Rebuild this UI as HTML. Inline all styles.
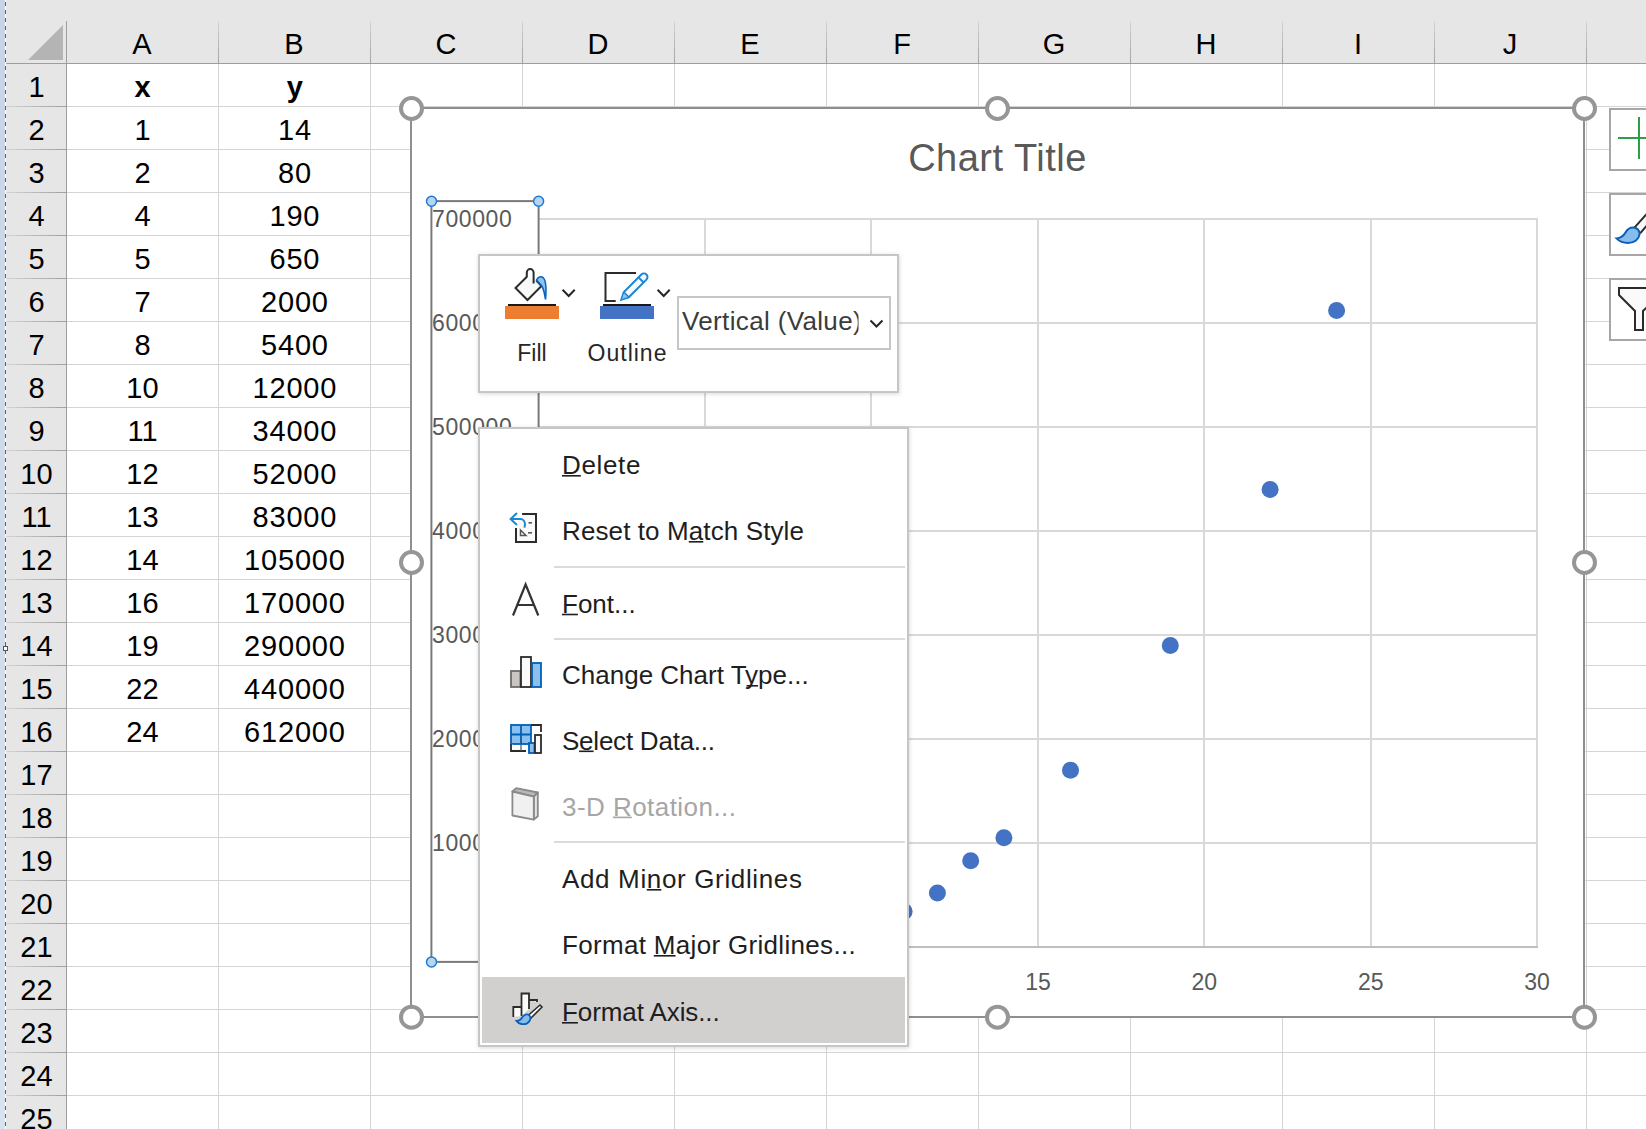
<!DOCTYPE html>
<html><head><meta charset="utf-8"><title>Excel chart</title><style>
html,body{margin:0;padding:0;width:1646px;height:1129px;overflow:hidden;background:#fff;}
svg{position:absolute;left:0;top:0;display:block;}
text{font-family:"Liberation Sans", sans-serif;}
</style></head><body>
<svg width="1646" height="1129" viewBox="0 0 1646 1129">
<defs>
<linearGradient id="hsep" x1="0" y1="0" x2="0" y2="1"><stop offset="0" stop-color="#d4d4d4"/><stop offset="1" stop-color="#a0a0a0"/></linearGradient>
<linearGradient id="vsep" x1="0" y1="0" x2="1" y2="0"><stop offset="0" stop-color="#d4d4d4"/><stop offset="1" stop-color="#a0a0a0"/></linearGradient>
<linearGradient id="strip" x1="0" y1="0" x2="0" y2="1"><stop offset="0" stop-color="#c8d4e6"/><stop offset="1" stop-color="#d9e2ef"/></linearGradient>
<filter id="sh" x="-5%" y="-5%" width="115%" height="115%"><feDropShadow dx="0.5" dy="1" stdDeviation="2" flood-color="#000" flood-opacity="0.15"/></filter>
</defs>
<rect x="0" y="0" width="5" height="1129" fill="url(#strip)"/>
<rect x="5" y="0" width="1" height="1129" fill="#fff"/>
<line x1="5.5" y1="2" x2="5.5" y2="1129" stroke="#0877d9" stroke-width="1" stroke-dasharray="4 4"/>
<rect x="6" y="0" width="1640" height="63" fill="#e6e6e6"/>
<rect x="6" y="63" width="60" height="1066" fill="#e6e6e6"/>
<rect x="218" y="64" width="1" height="1065" fill="#d4d4d4"/>
<rect x="370" y="64" width="1" height="1065" fill="#d4d4d4"/>
<rect x="522" y="64" width="1" height="1065" fill="#d4d4d4"/>
<rect x="674" y="64" width="1" height="1065" fill="#d4d4d4"/>
<rect x="826" y="64" width="1" height="1065" fill="#d4d4d4"/>
<rect x="978" y="64" width="1" height="1065" fill="#d4d4d4"/>
<rect x="1130" y="64" width="1" height="1065" fill="#d4d4d4"/>
<rect x="1282" y="64" width="1" height="1065" fill="#d4d4d4"/>
<rect x="1434" y="64" width="1" height="1065" fill="#d4d4d4"/>
<rect x="1586" y="64" width="1" height="1065" fill="#d4d4d4"/>
<rect x="67" y="106" width="1579" height="1" fill="#d4d4d4"/>
<rect x="67" y="149" width="1579" height="1" fill="#d4d4d4"/>
<rect x="67" y="192" width="1579" height="1" fill="#d4d4d4"/>
<rect x="67" y="235" width="1579" height="1" fill="#d4d4d4"/>
<rect x="67" y="278" width="1579" height="1" fill="#d4d4d4"/>
<rect x="67" y="321" width="1579" height="1" fill="#d4d4d4"/>
<rect x="67" y="364" width="1579" height="1" fill="#d4d4d4"/>
<rect x="67" y="407" width="1579" height="1" fill="#d4d4d4"/>
<rect x="67" y="450" width="1579" height="1" fill="#d4d4d4"/>
<rect x="67" y="493" width="1579" height="1" fill="#d4d4d4"/>
<rect x="67" y="536" width="1579" height="1" fill="#d4d4d4"/>
<rect x="67" y="579" width="1579" height="1" fill="#d4d4d4"/>
<rect x="67" y="622" width="1579" height="1" fill="#d4d4d4"/>
<rect x="67" y="665" width="1579" height="1" fill="#d4d4d4"/>
<rect x="67" y="708" width="1579" height="1" fill="#d4d4d4"/>
<rect x="67" y="751" width="1579" height="1" fill="#d4d4d4"/>
<rect x="67" y="794" width="1579" height="1" fill="#d4d4d4"/>
<rect x="67" y="837" width="1579" height="1" fill="#d4d4d4"/>
<rect x="67" y="880" width="1579" height="1" fill="#d4d4d4"/>
<rect x="67" y="923" width="1579" height="1" fill="#d4d4d4"/>
<rect x="67" y="966" width="1579" height="1" fill="#d4d4d4"/>
<rect x="67" y="1009" width="1579" height="1" fill="#d4d4d4"/>
<rect x="67" y="1052" width="1579" height="1" fill="#d4d4d4"/>
<rect x="67" y="1095" width="1579" height="1" fill="#d4d4d4"/>
<rect x="6" y="63" width="1640" height="1" fill="#9e9e9e"/>
<rect x="66" y="21" width="1" height="1108" fill="#9e9e9e"/>
<rect x="218" y="21" width="1" height="42" fill="url(#hsep)"/>
<rect x="370" y="21" width="1" height="42" fill="url(#hsep)"/>
<rect x="522" y="21" width="1" height="42" fill="url(#hsep)"/>
<rect x="674" y="21" width="1" height="42" fill="url(#hsep)"/>
<rect x="826" y="21" width="1" height="42" fill="url(#hsep)"/>
<rect x="978" y="21" width="1" height="42" fill="url(#hsep)"/>
<rect x="1130" y="21" width="1" height="42" fill="url(#hsep)"/>
<rect x="1282" y="21" width="1" height="42" fill="url(#hsep)"/>
<rect x="1434" y="21" width="1" height="42" fill="url(#hsep)"/>
<rect x="1586" y="21" width="1" height="42" fill="url(#hsep)"/>
<rect x="6" y="106" width="60" height="1" fill="url(#vsep)"/>
<rect x="6" y="149" width="60" height="1" fill="url(#vsep)"/>
<rect x="6" y="192" width="60" height="1" fill="url(#vsep)"/>
<rect x="6" y="235" width="60" height="1" fill="url(#vsep)"/>
<rect x="6" y="278" width="60" height="1" fill="url(#vsep)"/>
<rect x="6" y="321" width="60" height="1" fill="url(#vsep)"/>
<rect x="6" y="364" width="60" height="1" fill="url(#vsep)"/>
<rect x="6" y="407" width="60" height="1" fill="url(#vsep)"/>
<rect x="6" y="450" width="60" height="1" fill="url(#vsep)"/>
<rect x="6" y="493" width="60" height="1" fill="url(#vsep)"/>
<rect x="6" y="536" width="60" height="1" fill="url(#vsep)"/>
<rect x="6" y="579" width="60" height="1" fill="url(#vsep)"/>
<rect x="6" y="622" width="60" height="1" fill="url(#vsep)"/>
<rect x="6" y="665" width="60" height="1" fill="url(#vsep)"/>
<rect x="6" y="708" width="60" height="1" fill="url(#vsep)"/>
<rect x="6" y="751" width="60" height="1" fill="url(#vsep)"/>
<rect x="6" y="794" width="60" height="1" fill="url(#vsep)"/>
<rect x="6" y="837" width="60" height="1" fill="url(#vsep)"/>
<rect x="6" y="880" width="60" height="1" fill="url(#vsep)"/>
<rect x="6" y="923" width="60" height="1" fill="url(#vsep)"/>
<rect x="6" y="966" width="60" height="1" fill="url(#vsep)"/>
<rect x="6" y="1009" width="60" height="1" fill="url(#vsep)"/>
<rect x="6" y="1052" width="60" height="1" fill="url(#vsep)"/>
<rect x="6" y="1095" width="60" height="1" fill="url(#vsep)"/>
<polygon points="28,60 63,60 63,25" fill="#b4b4b4"/>
<text x="142" y="54" font-size="29" text-anchor="middle">A</text>
<text x="294" y="54" font-size="29" text-anchor="middle">B</text>
<text x="446" y="54" font-size="29" text-anchor="middle">C</text>
<text x="598" y="54" font-size="29" text-anchor="middle">D</text>
<text x="750" y="54" font-size="29" text-anchor="middle">E</text>
<text x="902" y="54" font-size="29" text-anchor="middle">F</text>
<text x="1054" y="54" font-size="29" text-anchor="middle">G</text>
<text x="1206" y="54" font-size="29" text-anchor="middle">H</text>
<text x="1358" y="54" font-size="29" text-anchor="middle">I</text>
<text x="1510" y="54" font-size="29" text-anchor="middle">J</text>
<text x="36.5" y="97" font-size="29" text-anchor="middle">1</text>
<text x="36.5" y="140" font-size="29" text-anchor="middle">2</text>
<text x="36.5" y="183" font-size="29" text-anchor="middle">3</text>
<text x="36.5" y="226" font-size="29" text-anchor="middle">4</text>
<text x="36.5" y="269" font-size="29" text-anchor="middle">5</text>
<text x="36.5" y="312" font-size="29" text-anchor="middle">6</text>
<text x="36.5" y="355" font-size="29" text-anchor="middle">7</text>
<text x="36.5" y="398" font-size="29" text-anchor="middle">8</text>
<text x="36.5" y="441" font-size="29" text-anchor="middle">9</text>
<text x="36.5" y="484" font-size="29" text-anchor="middle">10</text>
<text x="36.5" y="527" font-size="29" text-anchor="middle">11</text>
<text x="36.5" y="570" font-size="29" text-anchor="middle">12</text>
<text x="36.5" y="613" font-size="29" text-anchor="middle">13</text>
<text x="36.5" y="656" font-size="29" text-anchor="middle">14</text>
<text x="36.5" y="699" font-size="29" text-anchor="middle">15</text>
<text x="36.5" y="742" font-size="29" text-anchor="middle">16</text>
<text x="36.5" y="785" font-size="29" text-anchor="middle">17</text>
<text x="36.5" y="828" font-size="29" text-anchor="middle">18</text>
<text x="36.5" y="871" font-size="29" text-anchor="middle">19</text>
<text x="36.5" y="914" font-size="29" text-anchor="middle">20</text>
<text x="36.5" y="957" font-size="29" text-anchor="middle">21</text>
<text x="36.5" y="1000" font-size="29" text-anchor="middle">22</text>
<text x="36.5" y="1043" font-size="29" text-anchor="middle">23</text>
<text x="36.5" y="1086" font-size="29" text-anchor="middle">24</text>
<text x="36.5" y="1129" font-size="29" text-anchor="middle">25</text>
<text x="142.5" y="97" font-size="29" font-weight="bold" text-anchor="middle">x</text>
<text x="294.9" y="97" font-size="29" font-weight="bold" text-anchor="middle">y</text>
<text x="142.5" y="140" font-size="29" text-anchor="middle">1</text>
<text x="294.9" y="140" font-size="29" letter-spacing="0.8" text-anchor="middle">14</text>
<text x="142.5" y="183" font-size="29" text-anchor="middle">2</text>
<text x="294.9" y="183" font-size="29" letter-spacing="0.8" text-anchor="middle">80</text>
<text x="142.5" y="226" font-size="29" text-anchor="middle">4</text>
<text x="294.9" y="226" font-size="29" letter-spacing="0.8" text-anchor="middle">190</text>
<text x="142.5" y="269" font-size="29" text-anchor="middle">5</text>
<text x="294.9" y="269" font-size="29" letter-spacing="0.8" text-anchor="middle">650</text>
<text x="142.5" y="312" font-size="29" text-anchor="middle">7</text>
<text x="294.9" y="312" font-size="29" letter-spacing="0.8" text-anchor="middle">2000</text>
<text x="142.5" y="355" font-size="29" text-anchor="middle">8</text>
<text x="294.9" y="355" font-size="29" letter-spacing="0.8" text-anchor="middle">5400</text>
<text x="142.5" y="398" font-size="29" text-anchor="middle">10</text>
<text x="294.9" y="398" font-size="29" letter-spacing="0.8" text-anchor="middle">12000</text>
<text x="142.5" y="441" font-size="29" text-anchor="middle">11</text>
<text x="294.9" y="441" font-size="29" letter-spacing="0.8" text-anchor="middle">34000</text>
<text x="142.5" y="484" font-size="29" text-anchor="middle">12</text>
<text x="294.9" y="484" font-size="29" letter-spacing="0.8" text-anchor="middle">52000</text>
<text x="142.5" y="527" font-size="29" text-anchor="middle">13</text>
<text x="294.9" y="527" font-size="29" letter-spacing="0.8" text-anchor="middle">83000</text>
<text x="142.5" y="570" font-size="29" text-anchor="middle">14</text>
<text x="294.9" y="570" font-size="29" letter-spacing="0.8" text-anchor="middle">105000</text>
<text x="142.5" y="613" font-size="29" text-anchor="middle">16</text>
<text x="294.9" y="613" font-size="29" letter-spacing="0.8" text-anchor="middle">170000</text>
<text x="142.5" y="656" font-size="29" text-anchor="middle">19</text>
<text x="294.9" y="656" font-size="29" letter-spacing="0.8" text-anchor="middle">290000</text>
<text x="142.5" y="699" font-size="29" text-anchor="middle">22</text>
<text x="294.9" y="699" font-size="29" letter-spacing="0.8" text-anchor="middle">440000</text>
<text x="142.5" y="742" font-size="29" text-anchor="middle">24</text>
<text x="294.9" y="742" font-size="29" letter-spacing="0.8" text-anchor="middle">612000</text>
<rect x="3.5" y="646.5" width="4" height="4" fill="#fff" stroke="#555" stroke-width="1"/>
<rect x="410" y="107" width="1175" height="911" fill="#fff"/>
<rect x="539" y="842" width="999" height="2" fill="#d9d9d9"/>
<rect x="539" y="738" width="999" height="2" fill="#d9d9d9"/>
<rect x="539" y="634" width="999" height="2" fill="#d9d9d9"/>
<rect x="539" y="530" width="999" height="2" fill="#d9d9d9"/>
<rect x="539" y="426" width="999" height="2" fill="#d9d9d9"/>
<rect x="539" y="322" width="999" height="2" fill="#d9d9d9"/>
<rect x="539" y="218" width="999" height="2" fill="#d9d9d9"/>
<rect x="704" y="218" width="2" height="728" fill="#d9d9d9"/>
<rect x="870" y="218" width="2" height="728" fill="#d9d9d9"/>
<rect x="1037" y="218" width="2" height="728" fill="#d9d9d9"/>
<rect x="1203" y="218" width="2" height="728" fill="#d9d9d9"/>
<rect x="1370" y="218" width="2" height="728" fill="#d9d9d9"/>
<rect x="1536" y="218" width="2" height="728" fill="#d9d9d9"/>
<rect x="539" y="946" width="999" height="2" fill="#bfbfbf"/>
<text x="499" y="955" font-size="23" letter-spacing="0.6" fill="#595959">0</text>
<text x="432" y="851" font-size="23" letter-spacing="0.6" fill="#595959">100000</text>
<text x="432" y="747" font-size="23" letter-spacing="0.6" fill="#595959">200000</text>
<text x="432" y="643" font-size="23" letter-spacing="0.6" fill="#595959">300000</text>
<text x="432" y="539" font-size="23" letter-spacing="0.6" fill="#595959">400000</text>
<text x="432" y="435" font-size="23" letter-spacing="0.6" fill="#595959">500000</text>
<text x="432" y="331" font-size="23" letter-spacing="0.6" fill="#595959">600000</text>
<text x="432" y="227" font-size="23" letter-spacing="0.6" fill="#595959">700000</text>
<text x="539.0" y="990" font-size="23" text-anchor="middle" fill="#595959">0</text>
<text x="705.3" y="990" font-size="23" text-anchor="middle" fill="#595959">5</text>
<text x="871.7" y="990" font-size="23" text-anchor="middle" fill="#595959">10</text>
<text x="1038.0" y="990" font-size="23" text-anchor="middle" fill="#595959">15</text>
<text x="1204.3" y="990" font-size="23" text-anchor="middle" fill="#595959">20</text>
<text x="1370.7" y="990" font-size="23" text-anchor="middle" fill="#595959">25</text>
<text x="1537.0" y="990" font-size="23" text-anchor="middle" fill="#595959">30</text>
<circle cx="571.5" cy="947.0" r="8.5" fill="#4472c4"/>
<circle cx="604.7" cy="946.9" r="8.5" fill="#4472c4"/>
<circle cx="671.3" cy="946.8" r="8.5" fill="#4472c4"/>
<circle cx="704.5" cy="946.3" r="8.5" fill="#4472c4"/>
<circle cx="771.1" cy="944.9" r="8.5" fill="#4472c4"/>
<circle cx="804.3" cy="941.4" r="8.5" fill="#4472c4"/>
<circle cx="870.9" cy="934.5" r="8.5" fill="#4472c4"/>
<circle cx="904.1" cy="911.6" r="8.5" fill="#4472c4"/>
<circle cx="937.4" cy="892.9" r="8.5" fill="#4472c4"/>
<circle cx="970.7" cy="860.7" r="8.5" fill="#4472c4"/>
<circle cx="1003.9" cy="837.8" r="8.5" fill="#4472c4"/>
<circle cx="1070.5" cy="770.2" r="8.5" fill="#4472c4"/>
<circle cx="1170.3" cy="645.4" r="8.5" fill="#4472c4"/>
<circle cx="1270.1" cy="489.4" r="8.5" fill="#4472c4"/>
<circle cx="1336.6" cy="310.5" r="8.5" fill="#4472c4"/>
<text x="997.5" y="171" font-size="38" letter-spacing="0.5" text-anchor="middle" fill="#595959">Chart Title</text>
<rect x="430.4" y="200.1" width="2" height="762" fill="#7a7a7a"/>
<rect x="430.4" y="200.1" width="109" height="2" fill="#7a7a7a"/>
<rect x="537.6" y="200.1" width="2" height="762" fill="#7a7a7a"/>
<rect x="430.4" y="960.9" width="109" height="2" fill="#7a7a7a"/>
<circle cx="431.5" cy="201.2" r="5" fill="#b5d5f2" stroke="#1e7ad6" stroke-width="1.5"/>
<circle cx="538.6" cy="201.2" r="5" fill="#b5d5f2" stroke="#1e7ad6" stroke-width="1.5"/>
<circle cx="431.5" cy="962" r="5" fill="#b5d5f2" stroke="#1e7ad6" stroke-width="1.5"/>
<circle cx="538.6" cy="962" r="5" fill="#b5d5f2" stroke="#1e7ad6" stroke-width="1.5"/>
<rect x="410" y="107" width="1175" height="2" fill="#8f8f8f"/>
<rect x="410" y="1016" width="1175" height="2" fill="#8f8f8f"/>
<rect x="410" y="107" width="2" height="911" fill="#8f8f8f"/>
<rect x="1583" y="107" width="2" height="911" fill="#8f8f8f"/>
<circle cx="411.5" cy="108.5" r="10.5" fill="#fff" stroke="#969696" stroke-width="4"/>
<circle cx="411.5" cy="562.5" r="10.5" fill="#fff" stroke="#969696" stroke-width="4"/>
<circle cx="411.5" cy="1017.2" r="10.5" fill="#fff" stroke="#969696" stroke-width="4"/>
<circle cx="997.5" cy="108.5" r="10.5" fill="#fff" stroke="#969696" stroke-width="4"/>
<circle cx="997.5" cy="1017.2" r="10.5" fill="#fff" stroke="#969696" stroke-width="4"/>
<circle cx="1584.5" cy="108.5" r="10.5" fill="#fff" stroke="#969696" stroke-width="4"/>
<circle cx="1584.5" cy="562.5" r="10.5" fill="#fff" stroke="#969696" stroke-width="4"/>
<circle cx="1584.5" cy="1017.2" r="10.5" fill="#fff" stroke="#969696" stroke-width="4"/>
<rect x="1610" y="109" width="40" height="61" fill="#fff" stroke="#a6a6a6" stroke-width="2"/>
<rect x="1610" y="194" width="40" height="61" fill="#fff" stroke="#a6a6a6" stroke-width="2"/>
<rect x="1610" y="279" width="40" height="61" fill="#fff" stroke="#a6a6a6" stroke-width="2"/>
<rect x="1618" y="137" width="30" height="2" fill="#2f9e49"/><rect x="1638" y="117" width="2" height="42" fill="#2f9e49"/>
<path d="M1634,230 L1652,211 L1658,217 L1640,236 Z" fill="#f8f8f8"/>
<path d="M1634.2,227.8 L1652,208 M1640.1,233.4 L1656,215" stroke="#2b2b2b" stroke-width="2" fill="none"/>
<path d="M1616.5,238.4 C1621,238 1623.5,236 1625.5,232.5 C1627.5,229 1630,227.5 1633,227.5 C1637,227.5 1640,230.5 1639.5,234.5 C1639,239 1634.5,243 1628,243 C1622.5,243 1618.5,240.5 1616.5,238.4 Z" fill="#85bdec" stroke="#0b5fb8" stroke-width="2"/>
<path d="M1619,288 L1660,288 L1660,295 L1643,311 L1643,330 L1635,330 L1635,311 L1619,295 Z" fill="#fafafa" stroke="#2b2b2b" stroke-width="2" stroke-linejoin="miter"/>
<g filter="url(#sh)"><rect x="479" y="255" width="419" height="137" fill="#fff" stroke="#c6c6c6" stroke-width="2"/></g>
<rect x="505" y="306" width="54" height="13" fill="#ed7d31"/>
<rect x="508" y="304" width="48" height="2" fill="#1a1a1a"/>
<path d="M526.6,277 L515.5,288 L527.5,300 L541.5,286 L536.3,280.5" fill="#f8f8f8" stroke="#2b2b2b" stroke-width="2" stroke-linejoin="miter"/>
<path d="M526.8,277.5 L526.8,272.5 A3.4,3.4 0 0 1 533.6,272.5 L533.6,283.6" fill="none" stroke="#2b2b2b" stroke-width="2"/>
<path d="M536.5,280 C538,277 541,276 543,277.5 C546,280 546.5,288 545.5,299.5 C544.5,292 543,288 541.5,285.5 Z" fill="#8cc4f0" stroke="#0b63c0" stroke-width="1.6"/>
<path d="M562.6,289.8 L568.7,296 L574.7,289.8" fill="none" stroke="#262626" stroke-width="2"/>
<text x="532" y="361" font-size="23" text-anchor="middle" fill="#262626">Fill</text>
<rect x="600" y="306" width="54" height="13" fill="#4472c4"/>
<rect x="603" y="304" width="48" height="2" fill="#1a1a1a"/>
<path d="M636,273 L605.5,273 L605.5,301 L615.7,301" fill="none" stroke="#2b2b2b" stroke-width="2"/>
<g transform="translate(634,287) rotate(-45)"><path d="M-18,0 L-11,-3.6 L14,-3.6 A3.6,3.6 0 0 1 14,3.6 L-11,3.6 Z" fill="#f8f8f8" stroke="#1a86d4" stroke-width="2"/><path d="M-11,-3.6 L-11,3.6 M10,-3.6 L10,3.6" stroke="#1a86d4" stroke-width="2"/><path d="M-17,0 L-11.5,-2.6 L-11.5,2.6 Z" fill="#8cc4f0"/></g>
<path d="M657.6,289.8 L663.7,296 L669.7,289.8" fill="none" stroke="#262626" stroke-width="2"/>
<text x="627.5" y="361" font-size="23" letter-spacing="1" text-anchor="middle" fill="#262626">Outline</text>
<rect x="678" y="297" width="212" height="52" fill="#fff" stroke="#c6c6c6" stroke-width="2"/>
<clipPath id="vclip"><rect x="680" y="298" width="178.5" height="50"/></clipPath>
<text x="682" y="330" font-size="26" letter-spacing="0.35" fill="#3b3b3b" clip-path="url(#vclip)">Vertical (Value)</text>
<path d="M870.5,320.5 L876.5,326.5 L882.5,320.5" fill="none" stroke="#262626" stroke-width="2"/>
<g filter="url(#sh)"><rect x="479" y="428" width="429" height="618" fill="#fff" stroke="#c6c6c6" stroke-width="2"/></g>
<rect x="482" y="977" width="423" height="66" fill="#d2d0ce"/>
<rect x="554" y="566" width="351" height="2" fill="#dcdbd9"/>
<rect x="554" y="638" width="351" height="2" fill="#dcdbd9"/>
<rect x="554" y="841" width="351" height="2" fill="#dcdbd9"/>
<text x="562" y="474" font-size="26" letter-spacing="0.64" fill="#1e1e1e">Delete</text>
<rect x="562.0" y="475" width="18.8" height="1.6" fill="#1e1e1e"/>
<text x="562" y="540" font-size="26" letter-spacing="0.108" fill="#1e1e1e">Reset to Match Style</text>
<rect x="688.8" y="541" width="14.5" height="1.6" fill="#1e1e1e"/>
<text x="562" y="612.7" font-size="26" letter-spacing="0.0" fill="#1e1e1e">Font...</text>
<rect x="562.0" y="613.7" width="15.9" height="1.6" fill="#1e1e1e"/>
<text x="562" y="684" font-size="26" letter-spacing="0.003" fill="#1e1e1e">Change Chart Type...</text>
<rect x="746.5" y="685" width="11.6" height="1.6" fill="#1e1e1e"/>
<text x="562" y="749.5" font-size="26" letter-spacing="-0.232" fill="#1e1e1e">Select Data...</text>
<rect x="579.1" y="750.5" width="14.5" height="1.6" fill="#1e1e1e"/>
<text x="562" y="815.6" font-size="26" letter-spacing="0.456" fill="#a6a6a6">3-D Rotation...</text>
<rect x="612.9" y="816.6" width="18.8" height="1.6" fill="#a6a6a6"/>
<text x="562" y="888" font-size="26" letter-spacing="0.648" fill="#1e1e1e">Add Minor Gridlines</text>
<rect x="646.8" y="889" width="14.5" height="1.6" fill="#1e1e1e"/>
<text x="562" y="954" font-size="26" letter-spacing="0.319" fill="#1e1e1e">Format Major Gridlines...</text>
<rect x="653.8" y="955" width="21.7" height="1.6" fill="#1e1e1e"/>
<text x="562" y="1021" font-size="26" letter-spacing="-0.092" fill="#1e1e1e">Format Axis...</text>
<rect x="562.0" y="1022" width="15.9" height="1.6" fill="#1e1e1e"/>
<path d="M522.1,513.9 L536,513.9 L536,542 L516,542 L516,528" fill="#fafafa" stroke="#2b2b2b" stroke-width="2"/>
<path d="M517,513 L510.6,519 L517,525 M510.6,519 L520.4,519 C523,519 525,521.5 525,524.5 L524.5,527.6" fill="none" stroke="#1a86d4" stroke-width="2"/>
<path d="M520.5,530 L520.5,535.5 L526,535.5 Z" fill="none" stroke="#555" stroke-width="1.5"/>
<rect x="528.5" y="522" width="3.5" height="1.6" fill="#555"/><rect x="528" y="532" width="4" height="1.6" fill="#555"/>
<path d="M513,615.5 L525.6,584.5 L538.3,615.5 M517.5,605 L533.8,605" fill="none" stroke="#333" stroke-width="2.2" stroke-linejoin="miter"/>
<rect x="511" y="671" width="9.4" height="16" fill="#c8c6c4" stroke="#6e6b66" stroke-width="1.8"/>
<rect x="521" y="657" width="10" height="30" fill="#fafafa" stroke="#2b2b2b" stroke-width="1.8"/>
<rect x="532" y="663" width="9" height="24" fill="#8bbfec" stroke="#005fb8" stroke-width="1.8"/>
<rect x="511" y="725" width="20" height="19" fill="#8bbfec" stroke="#005fb8" stroke-width="1.8"/>
<path d="M521,725 L521,744 M511,734.5 L531,734.5" stroke="#005fb8" stroke-width="1.8"/>
<path d="M511,744 L511,751 L526,751" fill="#fafafa" stroke="#2b2b2b" stroke-width="1.8"/>
<path d="M521,744 L521,751" stroke="#555" stroke-width="1.2"/>
<path d="M531,725 L541,725 L541,732" fill="none" stroke="#2b2b2b" stroke-width="1.8"/>
<rect x="529" y="743" width="5.5" height="10" fill="#8bbfec" stroke="#005fb8" stroke-width="1.8"/>
<rect x="535" y="735" width="6" height="18" fill="#fafafa" stroke="#2b2b2b" stroke-width="1.8"/>
<path d="M512.4,791.5 L516.2,788.2 L537.8,792.5 L533.8,796.6 Z" fill="#b8b8b8" stroke="#8a8a8a" stroke-width="1.8" stroke-linejoin="round"/>
<path d="M533.8,796.6 L537.8,792.5 L537.8,816.2 L533.8,819.6 Z" fill="#e4e4e4" stroke="#8a8a8a" stroke-width="1.8" stroke-linejoin="round"/>
<path d="M512.4,791.5 L533.8,796.6 L533.8,819.6 L512.4,815.5 Z" fill="#f0f0f0" stroke="#8a8a8a" stroke-width="1.8" stroke-linejoin="round"/>
<path d="M513.3,1017 L513.3,1007 L521.5,1007 L521.5,1016 M521.5,1016 L521.5,993.5 L529,993.5 L529,1009 M529,1000 L537,1000 L537,1002" fill="#fafafa" stroke="#2b2b2b" stroke-width="1.8"/>
<path d="M527.5,1016 L540,1005 L542,1007 L530.5,1018.5 Z" fill="#fafafa" stroke="#2b2b2b" stroke-width="1.6"/>
<path d="M516.5,1021 C519,1021 521,1019.5 522.5,1017 C524,1015 526,1014 528,1014.5 C530.5,1015.5 531,1018.5 529.5,1021 C528,1023.5 524.5,1024.5 521.5,1024 C519,1023.5 517.5,1022.5 516.5,1021 Z" fill="#85bdec" stroke="#0b5fb8" stroke-width="1.8"/>
</svg>
</body></html>
